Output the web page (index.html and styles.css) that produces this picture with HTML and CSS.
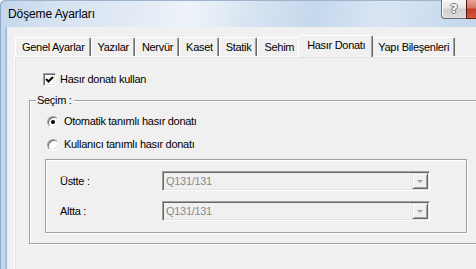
FILE: index.html
```html
<!DOCTYPE html>
<html lang="tr">
<head>
<meta charset="utf-8">
<title>Döşeme Ayarları</title>
<link rel="stylesheet" href="styles.css">
</head>
<body>
<div class="window">
  <div class="titlebar">
    <span class="title">Döşeme Ayarları</span>
    <div class="cap-btn help">?</div>
    <div class="cap-btn close"></div>
  </div>
  <div class="frame">
    <div class="frame-left"></div>
    <div class="client">
      <div class="tabs">
        <div class="tab">Genel Ayarlar</div>
        <div class="tab">Yazılar</div>
        <div class="tab">Nervür</div>
        <div class="tab">Kaset</div>
        <div class="tab">Statik</div>
        <div class="tab">Sehim</div>
        <div class="tab selected">Hasır Donatı</div>
        <div class="tab">Yapı Bileşenleri</div>
      </div>
      <div class="panel">
        <div class="check-row">
          <span class="checkbox">
            <svg width="9" height="9" viewBox="0 0 9 9"><polyline points="1,4 3.5,6.5 8,2" fill="none" stroke="#000" stroke-width="2"/></svg>
          </span>
          <span class="label">Hasır donatı kullan</span>
        </div>
        <div class="group">
          <div class="legend">Seçim :</div>
          <div class="radio-row first">
            <span class="radio"><span class="dot"></span></span>
            <span class="label">Otomatik tanımlı hasır donatı</span>
          </div>
          <div class="radio-row">
            <span class="radio"></span>
            <span class="label">Kullanıcı tanımlı hasır donatı</span>
          </div>
          <div class="inner-box">
            <div class="field-row">
              <span class="field-label">Üstte :</span>
              <div class="combo">
                <span class="combo-text">Q131/131</span>
                <span class="combo-btn"><span class="arrow"></span></span>
              </div>
            </div>
            <div class="field-row">
              <span class="field-label">Altta :</span>
              <div class="combo">
                <span class="combo-text">Q131/131</span>
                <span class="combo-btn"><span class="arrow"></span></span>
              </div>
            </div>
          </div>
        </div>
      </div>
    </div>
  </div>
</div>
</body>
</html>
```
FILE: styles.css
```css
html, body {
  margin: 0;
  padding: 0;
}
body {
  width: 476px;
  height: 269px;
  overflow: hidden;
  background: #f0f0f0;
  font-family: "Liberation Sans", Arial, sans-serif;
  font-size: 11px;
  letter-spacing: -0.3px;
  color: #000;
}
.window {
  display: flex;
  flex-direction: column;
  width: 476px;
  height: 269px;
}
.titlebar {
  display: flex;
  height: 27px;
  flex: none;
  background: linear-gradient(100deg, #c2d5eb 0%, #d6e3f2 12%, #e2eaf5 28%, #eef3f9 40%, #d8e4f2 52%, #c6d8ed 66%, #d9e5f3 80%, #c3d6ec 100%);
  border-top-left-radius: 6px;
  box-shadow: inset 1px 0 #8ea7c4, inset 0 1px #9fb4cc;
}
.title {
  flex: 1;
  padding: 7px 0 0 8px;
  font-size: 12px;
  line-height: 14px;
  letter-spacing: -0.1px;
}
.cap-btn {
  height: 18px;
  flex: none;
}
.help {
  width: 24px;
  border: 1px solid #6f6f6f;
  border-top: none;
  border-right: none;
  border-bottom-left-radius: 4px;
  background: linear-gradient(#f6f6f6, #e6e6e6 45%, #cfcfcf 50%, #dcdcdc);
  box-shadow: inset 1px 0 #fff;
  color: #fafafa;
  font-family: "DejaVu Sans", sans-serif;
  font-size: 13px;
  font-weight: bold;
  line-height: 18px;
  letter-spacing: 0;
  text-align: center;
  text-shadow: 1px 0 #7a7a7a, -1px 0 #7a7a7a, 0 1px #7a7a7a, 0 -1px #7a7a7a;
}
.close {
  width: 9px;
  border-left: 1px solid #4e1409;
  border-bottom: 1px solid #6b1e10;
  background: linear-gradient(#e7a595, #d47463 45%, #c23a22 50%, #d25a3c);
}
.frame {
  display: flex;
  flex: 1;
}
.frame-left {
  width: 8px;
  flex: none;
  background: linear-gradient(to right, #8ea9c9 0 1px, #c2d7ef 1px 5px, #a6c0e0 5px 7px, #e6edf5 7px 8px);
}
.client {
  flex: 1;
  padding-left: 6px;
  overflow: hidden;
}
.tabs {
  display: flex;
  align-items: flex-end;
  margin-top: 8px;
  padding-left: 1px;
  height: 21px;
}
.tab {
  flex: none;
  height: 15px;
  padding: 3px 5px 0 6px;
  line-height: 13px;
  border-top: 1px solid #fff;
  border-left: 1px solid #fff;
  border-right: 1px solid #696969;
  border-radius: 2px 2px 0 0;
  box-shadow: inset -1px 0 #a0a0a0;
  background: #f0f0f0;
  white-space: nowrap;
}
.tab.selected {
  position: relative;
  z-index: 1;
  height: 18px;
  margin: 0 -2px -1px -2px;
  padding: 3px 7px 0 8px;
}
.panel {
  width: 480px;
  height: 220px;
  border-top: 1px solid #fff;
  border-left: 1px solid #fff;
  box-shadow: inset 1px 1px #e3e3e3;
}
.check-row, .radio-row {
  display: flex;
  align-items: center;
  height: 13px;
  line-height: 13px;
}
.check-row {
  margin: 16px 0 0 28px;
}
.checkbox {
  width: 9px;
  height: 9px;
  flex: none;
  display: flex;
  align-items: center;
  justify-content: center;
  background: #fff;
  border-style: solid;
  border-width: 1px;
  border-color: #a0a0a0 #fff #fff #a0a0a0;
  box-shadow: inset 1px 1px #696969, inset -1px -1px #e3e3e3;
  padding: 1px;
}
.checkbox svg {
  display: block;
}
.check-row .label {
  margin-left: 4px;
}
.group {
  margin: 14px 0 0 14px;
  width: 470px;
  padding-bottom: 10px;
  border: 1px solid #a0a0a0;
  box-shadow: inset 1px 1px #fff, 1px 1px #fff;
}
.legend {
  width: max-content;
  margin: -7px 0 0 6px;
  padding: 0 2px 0 1px;
  line-height: 13px;
  background: #f0f0f0;
}
.radio-row {
  margin: 10px 0 0 17px;
}
.radio-row.first {
  margin-top: 8px;
}
.radio {
  width: 10px;
  height: 10px;
  flex: none;
  border-radius: 50%;
  border: 1px solid;
  border-color: #a0a0a0 #fff #fff #a0a0a0;
  box-shadow: inset 1px 1px #696969, inset -1px -1px #e3e3e3;
  background: #fff;
  display: flex;
  align-items: center;
  justify-content: center;
}
.dot {
  width: 4px;
  height: 4px;
  border-radius: 50%;
  background: #000;
}
.radio-row .label {
  margin-left: 5px;
}
.inner-box {
  margin: 8px 0 0 15px;
  width: 420px;
  height: 72px;
  border: 1px solid #a0a0a0;
  box-shadow: inset 1px 1px #fff, 1px 1px #fff;
  display: flex;
  flex-direction: column;
  gap: 10px;
}
.field-row {
  display: flex;
  align-items: center;
  height: 20px;
}
.field-row:first-child {
  margin-top: 11px;
}
.field-label {
  width: 102px;
  padding-left: 14px;
  line-height: 13px;
  flex: none;
}
.combo {
  display: flex;
  align-items: stretch;
  width: 264px;
  height: 16px;
  border: 1px solid;
  border-color: #a0a0a0 #fff #fff #a0a0a0;
  box-shadow: inset 1px 1px #696969, inset -1px -1px #e3e3e3;
  padding: 1px;
  background: #f0f0f0;
}
.combo-text {
  flex: 1;
  padding-left: 2px;
  line-height: 16px;
  color: #8a8a8a;
}
.combo-btn {
  width: 14px;
  flex: none;
  border: 1px solid;
  border-color: #e3e3e3 #696969 #696969 #e3e3e3;
  box-shadow: inset 1px 1px #fff, inset -1px -1px #a0a0a0;
  background: #f0f0f0;
  display: flex;
  align-items: center;
  justify-content: center;
}
.arrow {
  width: 0;
  height: 0;
  border-left: 3px solid transparent;
  border-right: 3px solid transparent;
  border-top: 3px solid #a0a0a0;
  margin-top: 1px;
}
```
